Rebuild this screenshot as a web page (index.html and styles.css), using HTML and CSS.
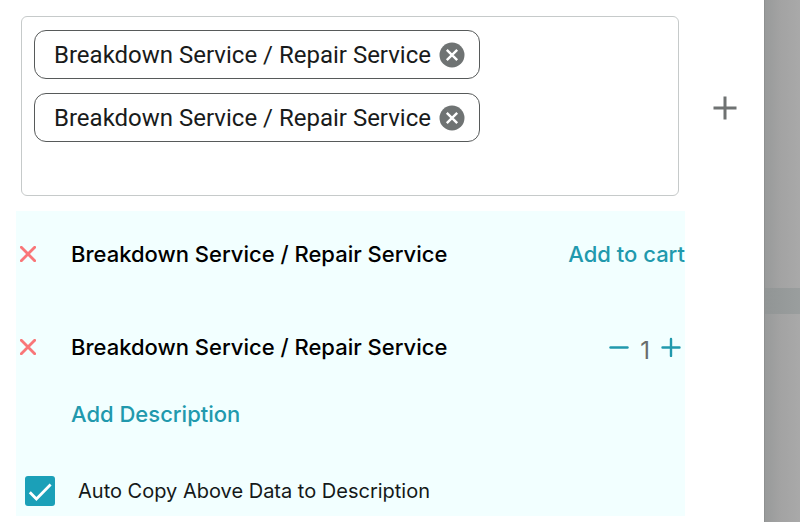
FILE: index.html
```html
<!DOCTYPE html>
<html lang="en">
<head>
<meta charset="utf-8">
<title>Add services</title>
<link rel="stylesheet" href="styles.css">
</head>
<body>
<main class="panel">
  <section class="picker">
    <div class="field">
      <span class="chip">Breakdown Service / Repair Service
        <button class="icon-button" type="button" aria-label="Remove chip"><svg width="26" height="26" viewBox="0 0 26 26"><circle cx="13" cy="13" r="12.5" fill="#6f7373"/><path d="M7.8 7.8l10.4 10.4M18.2 7.8L7.8 18.2" stroke="#fff" stroke-width="2.4"/></svg></button>
      </span>
      <span class="chip">Breakdown Service / Repair Service
        <button class="icon-button" type="button" aria-label="Remove chip"><svg width="26" height="26" viewBox="0 0 26 26"><circle cx="13" cy="13" r="12.5" fill="#6f7373"/><path d="M7.8 7.8l10.4 10.4M18.2 7.8L7.8 18.2" stroke="#fff" stroke-width="2.4"/></svg></button>
      </span>
    </div>
    <button class="icon-button add" type="button" aria-label="Add service"><svg width="24" height="24" viewBox="0 0 24 24"><path d="M12 .5v23M.5 12h23" stroke="#6f7272" stroke-width="3"/></svg></button>
  </section>
  <section class="services">
    <div class="row">
      <button class="icon-button remove" type="button" aria-label="Remove service"><svg width="16" height="16" viewBox="0 0 16 16"><path d="M1.3 1.3l13.4 13.4M14.7 1.3L1.3 14.7" stroke="#f97678" stroke-width="2.8" stroke-linecap="round"/></svg></button>
      <span class="name">Breakdown Service / Repair Service</span>
      <a class="link" href="#cart">Add to cart</a>
    </div>
    <div class="row row-tall">
      <button class="icon-button remove" type="button" aria-label="Remove service"><svg width="16" height="16" viewBox="0 0 16 16"><path d="M1.3 1.3l13.4 13.4M14.7 1.3L1.3 14.7" stroke="#f97678" stroke-width="2.8" stroke-linecap="round"/></svg></button>
      <span class="name">Breakdown Service / Repair Service</span>
      <div class="stepper">
        <button class="icon-button" type="button" aria-label="Decrease quantity"><svg width="20" height="20" viewBox="0 0 20 20"><path d="M1.5 10.5h17" stroke="#2199ad" stroke-width="2.4" stroke-linecap="round"/></svg></button>
        <span class="count">1</span>
        <button class="icon-button" type="button" aria-label="Increase quantity"><svg width="20" height="20" viewBox="0 0 20 20"><path d="M1.5 10.5h17M10 2v17" stroke="#2199ad" stroke-width="2.4" stroke-linecap="round"/></svg></button>
      </div>
    </div>
    <div class="description"><a class="link" href="#description">Add Description</a></div>
    <div class="copy">
      <span class="tick">
        <input type="checkbox" id="auto-copy" checked>
        <svg class="tick-mark" width="30" height="30" viewBox="0 0 30 30"><path d="M4.8 16.2l6.6 6.8L25.6 8.6" fill="none" stroke="#fff" stroke-width="2.8"/></svg>
      </span>
      <label for="auto-copy">Auto Copy Above Data to Description</label>
    </div>
  </section>
</main>
<aside class="backdrop"><div class="band"></div></aside>
</body>
</html>
```
FILE: styles.css
```css
* {
  box-sizing: border-box;
}

body {
  margin: 0;
  min-height: 100vh;
  display: flex;
  background: #fff;
  color: #000;
  font-family: Inter, "Liberation Sans", sans-serif;
  font-size: 22px;
}

.panel {
  flex: 1;
  padding: 16px 0 0 16px;
}

.picker {
  display: grid;
  grid-template-columns: 1fr 79px;
  align-items: center;
}

.field {
  display: flex;
  flex-direction: column;
  align-items: flex-start;
  gap: 14px;
  min-height: 180px;
  margin: 0 6px 0 5px;
  padding: 13px 12px;
  border: 1px solid #c6caca;
  border-radius: 6px;
}

.chip {
  display: flex;
  align-items: center;
  gap: 8px;
  height: 49px;
  padding: 0 14px 0 19px;
  border: 1px solid #575a5a;
  border-radius: 12px;
  color: #191b1b;
  font-family: Roboto, sans-serif;
  font-size: 24px;
  white-space: nowrap;
}

.icon-button {
  display: block;
  padding: 0;
  border: 0;
  background: none;
  cursor: pointer;
}

.icon-button svg {
  display: block;
}

.add {
  justify-self: center;
  margin-top: 4px;
}

.services {
  margin: 15px 79px 0 0;
  background: #f2ffff;
}

.row {
  display: grid;
  grid-template-columns: 55px 1fr auto;
  align-items: center;
  height: 86px;
}

.row-tall {
  height: 100px;
}

.remove {
  margin-left: 4px;
}

.name,
.link {
  font-weight: 500;
}

.link {
  color: #2199ad;
  text-decoration: none;
}

.stepper {
  display: flex;
  align-items: center;
  gap: 11px;
  padding-right: 4px;
}

.count {
  padding-top: 6px;
  color: #686c6c;
  font-size: 24px;
}

.description {
  display: flex;
  align-items: center;
  height: 34px;
  padding-left: 55px;
}

.copy {
  display: flex;
  align-items: center;
  gap: 23px;
  padding: 45px 0 10px 9px;
  color: #151919;
  font-size: 20px;
}

.tick {
  display: grid;
}

.tick input,
.tick-mark {
  grid-area: 1 / 1;
}

.tick input {
  appearance: none;
  width: 30px;
  height: 30px;
  margin: 0;
  border-radius: 3px;
  background: #1ba0b8;
}

.tick-mark {
  pointer-events: none;
}

.backdrop {
  display: grid;
  grid-template-rows: 288px 26px 1fr;
  width: 36px;
  border-left: 1px solid #8e9090;
  background: linear-gradient(to right, #989a9a, #a3a3a3 45%, #a9a9a9);
}

.band {
  grid-row: 2;
  background: linear-gradient(to right, #919595, #9a9e9e);
}
```
